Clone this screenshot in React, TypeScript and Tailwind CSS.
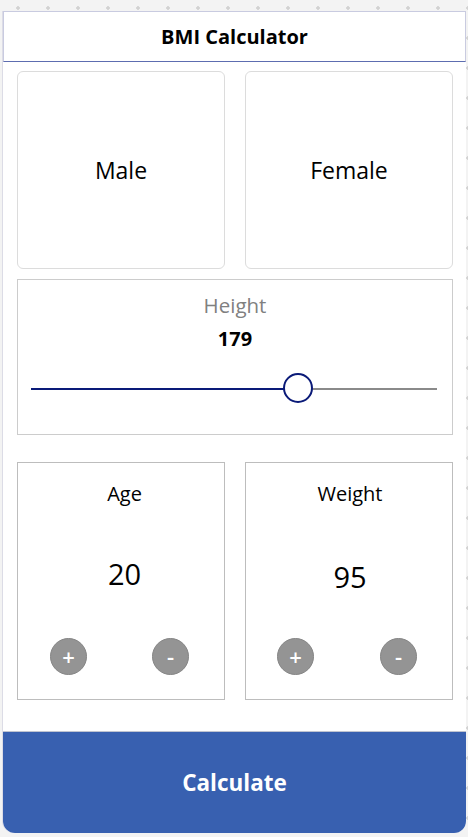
import React from "react";

function RoundBtn({ label }: { label: string }) {
  return (
    <div className="w-[37px] h-[37px] rounded-full bg-[#949494] border border-[#858585] flex items-center justify-center text-white text-[22px] font-semibold leading-none">
      <span className="-mt-[2px]">{label}</span>
    </div>
  );
}

function Counter({ title, value, valueOffset, btnX, textShift }: { title: string; value: string; valueOffset: string; btnX: string; textShift: string }) {
  return (
    <div className="w-[208px] h-[238px] border border-[#bdbdbd] flex flex-col items-center">
      <div className={`mt-[17px] ${textShift} text-[20px] leading-[28px] text-black`}>{title}</div>
      <div className={`${valueOffset} ${textShift} text-[29px] leading-[40px] text-black`}>{value}</div>
      <div className={`mt-auto mb-[24px] w-full flex justify-between ${btnX}`}>
        <RoundBtn label="+" />
        <RoundBtn label="-" />
      </div>
    </div>
  );
}

export default function App() {
  return (
    <div
      className="w-[468px] h-[837px] bg-[#f3f3f3] bg-[radial-gradient(circle,#d2d2d2_1.5px,transparent_2px)] bg-[size:30px_30px] bg-[position:3px_-7px] pt-[11px] px-[2px] overflow-hidden"
      style={{ fontFamily: '"Open Sans", "Noto Sans", sans-serif' }}
    >
      <div className="w-[464px] h-[822px] bg-white flex flex-col rounded-b-[12px] border-l border-[#dcdce6]">
        <div className="h-[51px] border border-[#c9cbe0] border-b-[#5d6db0] flex items-center justify-center text-[20px] font-bold text-black">
          BMI Calculator
        </div>
        <div className="flex flex-col pl-[14px] pr-[13px]">
          <div className="mt-[9px] flex gap-[20px]">
            <div className="w-[208px] h-[198px] shrink-0 rounded-[6px] border border-[#dcdcdc] flex items-center justify-center text-[23px] text-black">
              Male
            </div>
            <div className="w-[208px] h-[198px] shrink-0 rounded-[6px] border border-[#dcdcdc] flex items-center justify-center text-[23px] text-black">
              Female
            </div>
          </div>
          <div className="mt-[10px] w-[436px] h-[156px] border border-[#cccccc] flex flex-col items-center">
            <div className="mt-[11px] text-[20.5px] leading-[28px] text-[#808080]">Height</div>
            <div className="mt-[6px] text-[20px] leading-[28px] font-bold text-black">179</div>
            <div className="mt-[20px] self-start ml-[13px] w-[406px] relative h-[32px] flex items-center">
              <div className="h-[2px] w-[266px] bg-[#0a1a78]" />
              <div className="h-[2px] flex-1 bg-[#8a8a8a]" />
              <div className="absolute left-[252px] top-0 w-[30px] h-[30px] rounded-full border-2 border-[#0a1a78] bg-white" />
            </div>
          </div>
          <div className="mt-[27px] flex gap-[20px]">
            <Counter title="Age" value="20" valueOffset="mt-[46px]" btnX="pl-[32px] pr-[35px]" textShift="ml-[7px]" />
            <Counter title="Weight" value="95" valueOffset="mt-[49px]" btnX="pl-[31px] pr-[35px]" textShift="ml-[2px]" />
          </div>
        </div>
        <div className="mt-auto h-[102px] bg-[#3860b0] border-t border-[#c0c4d0] rounded-b-[12px] flex items-center justify-center text-white text-[22.5px] font-bold">
          Calculate
        </div>
      </div>
    </div>
  );
}
